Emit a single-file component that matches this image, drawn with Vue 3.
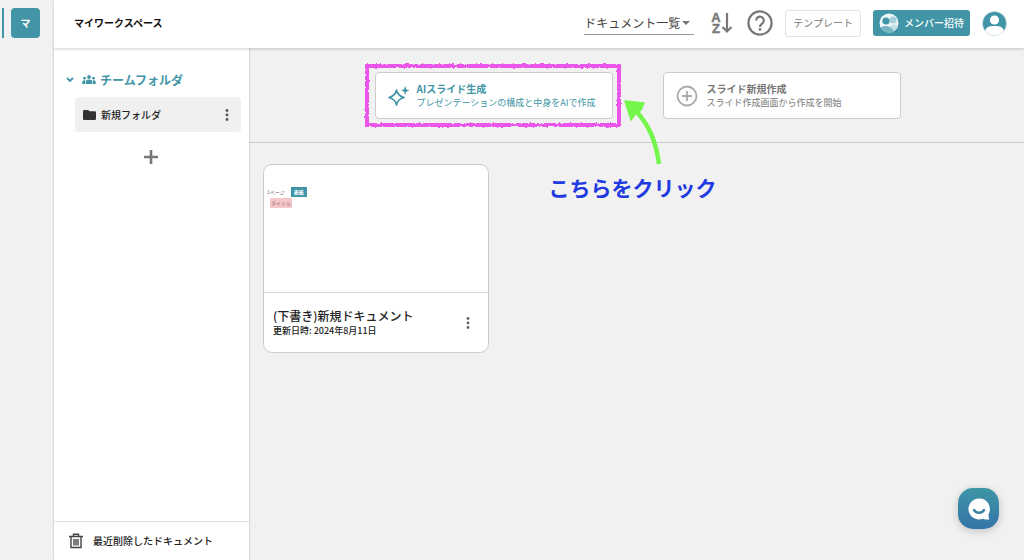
<script setup>
import { ref } from 'vue'

const listKind = ref('all')
const folders = ref([{ id: 1, name: '新規フォルダ' }])
const documents = ref([
  { id: 1, title: '(下書き)新規ドキュメント', updated: '2024年8月11日' },
])
</script>

<template>
  <div class="app">
    <nav class="rail" aria-label="ワークスペース">
      <span class="rail-mark"></span>
      <button class="workspace" type="button">マ</button>
    </nav>

    <div class="shell">
      <header class="topbar">
        <h1>マイワークスペース</h1>
        <div class="tools">
          <div class="select-wrap">
            <select v-model="listKind" aria-label="表示">
              <option value="all">ドキュメント一覧</option>
            </select>
            <svg class="caret" width="8" height="4" viewBox="0 0 8 4"><path d="M0 0h8L4 4z" fill="#777" /></svg>
          </div>
          <button class="icon-btn sort" type="button" aria-label="並び替え">
            <svg width="22" height="24" viewBox="0 0 22 24">
              <text text-anchor="middle" class="sort-letter"><tspan x="5" y="11">A</tspan><tspan x="5" y="22">Z</tspan></text>
              <path d="M16 2v18M11.500 16l4.500 4.500 4.500-4.500" fill="none" stroke="#777" stroke-width="2.200" />
            </svg>
          </button>
          <button class="icon-btn help" type="button" aria-label="ヘルプ">
            <svg width="26" height="26" viewBox="0 0 26 26" fill="none" stroke="#777">
              <circle cx="13" cy="13" r="11.600" stroke-width="2.200" />
              <path d="M9.200 10.500a3.800 3.800 0 1 1 6.400 2.700c-1.500 1.300-2.600 1.900-2.600 3.800" stroke-width="2.200" />
              <circle cx="13" cy="19.400" r="1.400" fill="#777" stroke="none" />
            </svg>
          </button>
          <button class="template" type="button">テンプレート</button>
          <button class="invite" type="button">
            <svg width="20" height="20" viewBox="0 0 20 20">
              <defs><clipPath id="invite-clip"><circle cx="10" cy="10" r="9.500" /></clipPath></defs>
              <circle cx="10" cy="10" r="9.500" fill="#edf6f8" />
              <g clip-path="url(#invite-clip)">
                <circle cx="14" cy="7" r="3.500" fill="#a5cdd6" />
                <path d="M10 20c0-7 2-8.500 5-8.500s5 2 5 8.500z" fill="#c3dfe5" />
                <circle cx="7" cy="8" r="3.600" fill="#4195a6" />
                <path d="M1 20c0-6 2-7 6-7s7 2 8 7z" fill="#78b5c2" />
              </g>
            </svg>
            メンバー招待
          </button>
          <button class="icon-btn avatar" type="button" aria-label="アカウント">
            <svg width="25" height="25" viewBox="0 0 25 25">
              <defs><clipPath id="avatar-clip"><circle cx="12.500" cy="12.500" r="12" /></clipPath></defs>
              <circle cx="12.500" cy="12.500" r="12" fill="#4195a6" />
              <g fill="#fff" clip-path="url(#avatar-clip)">
                <circle cx="12.500" cy="9" r="4.600" />
                <path d="M3 20c1-4 4-5 9.500-5s8.500 1 9.500 5l-3 5H6z" />
              </g>
              <circle cx="12.500" cy="12.500" r="12" fill="none" stroke="#d5e8ec" stroke-width=".6" />
            </svg>
          </button>
        </div>
      </header>

      <div class="body">
        <aside class="sidebar">
          <div class="tree">
            <button class="team" type="button">
              <svg class="chevron" width="8" height="6" viewBox="0 0 8 6"><path d="M1 1l3 3 3-3" fill="none" stroke="#4195a6" stroke-width="1.800" /></svg>
              <svg width="14" height="10" viewBox="0 0 14 10" fill="#4195a6">
                <circle cx="7" cy="2" r="1.900" /><circle cx="2.500" cy="3.200" r="1.400" /><circle cx="11.500" cy="3.200" r="1.400" />
                <path d="M4 9V6.500C4 5.300 5 4.600 7 4.600s3 .7 3 1.900V9z" />
                <path d="M.3 9V6.800C.3 5.700 1.100 5.200 3.300 5.200V9zM13.700 9V6.800c0-1.100-.8-1.600-3-1.600V9z" />
              </svg>
              チームフォルダ
            </button>
            <div v-for="f in folders" :key="f.id" class="folder">
              <button class="folder-name" type="button">
                <svg width="13" height="10" viewBox="0 0 13 10"><path d="M1.300 0h3.900l1.300 1.300h5.200c.7 0 1.300.5 1.300 1.200v6.200c0 .7-.6 1.300-1.300 1.300H1.300C.6 10 0 9.400 0 8.700V1.300C0 .6.600 0 1.300 0z" fill="#333" /></svg>
                {{ f.name }}
              </button>
              <button class="icon-btn dots" type="button" aria-label="フォルダメニュー"><svg width="4" height="12" viewBox="0 0 4 12" fill="#555"><circle cx="2" cy="1.500" r="1.400" /><circle cx="2" cy="6" r="1.400" /><circle cx="2" cy="10.500" r="1.400" /></svg></button>
            </div>
            <button class="icon-btn add" type="button" aria-label="フォルダを追加">
              <svg width="14" height="14" viewBox="0 0 14 14"><path d="M7 0v14M0 7h14" stroke="#777" stroke-width="2.600" /></svg>
            </button>
          </div>
          <button class="trash" type="button">
            <svg width="14" height="16" viewBox="0 0 14 16" fill="none" stroke="#444" stroke-width="1.400">
              <path d="M0 3.500h14M4.500 3.500V1.200h5v2.300M2 3.500v11h10v-11M5 6v6.500M7 6v6.500M9 6v6.500" />
            </svg>
            最近削除したドキュメント
          </button>
        </aside>

        <main>
          <section class="actions">
            <div class="action-slot">
              <button class="action ai" type="button">
                <svg width="22" height="22" viewBox="0 0 22 22" fill="none" stroke="#4195a6">
                  <path d="M8.500 5C9.300 9.500 11.200 11.200 16 12.500 11.200 13.800 9.300 15.500 8.500 20 7.700 15.500 5.800 13.800 1 12.500 5.800 11.200 7.700 9.500 8.500 5z" stroke-width="1.600" stroke-linejoin="round" />
                  <path d="M17.200 1.500c.3 2.500 1.200 3.500 3.600 3.900-2.400.4-3.300 1.400-3.600 3.900-.3-2.500-1.200-3.500-3.600-3.900 2.400-.4 3.300-1.400 3.600-3.900z" fill="#4195a6" stroke-width=".5" />
                </svg>
                <span class="action-text"><strong>AIスライド生成</strong><small>プレゼンテーションの構成と中身をAIで作成</small></span>
              </button>
              <svg class="marker" aria-hidden="true">
                <defs>
                  <filter id="rough" x="-5%" y="-10%" width="110%" height="120%">
                    <feTurbulence type="fractalNoise" baseFrequency=".35" numOctaves="2" seed="4" />
                    <feDisplacementMap in="SourceGraphic" scale="3" xChannelSelector="R" yChannelSelector="G" />
                  </filter>
                </defs>
                <g filter="url(#rough)"><rect class="marker-line" x="3" y="3" /></g>
              </svg>
              <svg class="arrow" width="40" height="70" viewBox="0 0 40 70" aria-hidden="true">
                <path d="M14 14C27 29 33 44 36 66" fill="none" stroke="#75f64c" stroke-width="4.500" />
                <path d="M2 3l19 2-3 7-5 3-5 7z" fill="#75f64c" stroke="#75f64c" stroke-width="1.500" stroke-linejoin="round" />
              </svg>
              <p class="callout">こちらをクリック</p>
            </div>
            <div class="action-slot">
              <button class="action" type="button">
                <svg width="22" height="22" viewBox="0 0 22 22" fill="none" stroke="#aaa" stroke-width="1.800"><circle cx="11" cy="11" r="9.500" /><path d="M11 6v10M6 11h10" /></svg>
                <span class="action-text"><strong>スライド新規作成</strong><small>スライド作成画面から作成を開始</small></span>
              </button>
            </div>
          </section>

          <section class="documents">
            <article v-for="d in documents" :key="d.id" class="doc">
              <div class="preview">
                <div class="page-line"><span>1ページ</span><span class="cover">表紙</span></div>
                <span class="title-tag">タイトル</span>
              </div>
              <div class="doc-info">
                <div>
                  <h2>{{ d.title }}</h2>
                  <p>更新日時: {{ d.updated }}</p>
                </div>
                <button class="icon-btn dots" type="button" aria-label="ドキュメントメニュー"><svg width="4" height="12" viewBox="0 0 4 12" fill="#666"><circle cx="2" cy="1.500" r="1.400" /><circle cx="2" cy="6" r="1.400" /><circle cx="2" cy="10.500" r="1.400" /></svg></button>
              </div>
            </article>
          </section>
        </main>
      </div>
    </div>

    <button class="chat" type="button" aria-label="チャット">
      <svg width="22" height="22" viewBox="0 0 22 22">
        <path d="M11 .5A10.500 10.500 0 1 0 15 20.700c2 .7 4 .8 6.500.8-.8-1.500-1-3-.9-5.500A10.500 10.500 0 0 0 11 .5z" fill="#fff" />
        <path d="M6 12c2.500 3.600 7.500 3.600 10 0" fill="none" stroke="#3783a5" stroke-width="2.400" stroke-linecap="round" />
      </svg>
    </button>
  </div>
</template>

<style>
body {
  margin: 0;
}
</style>

<style scoped>
.app {
  display: flex;
  min-height: 100vh;
  background: #f1f1f1;
  color: #222;
  font-family: "Noto Sans CJK JP", sans-serif;
  font-size: 10px;
  line-height: 16px;
}
.app * {
  box-sizing: border-box;
}
button, select {
  margin: 0;
  padding: 0;
  border: 0;
  background: none;
  color: inherit;
  font: inherit;
  cursor: pointer;
}
svg {
  display: block;
  flex: none;
}
h1, h2, p {
  margin: 0;
}
.icon-btn {
  display: flex;
  align-items: center;
  justify-content: center;
}
.rail {
  flex: 0 0 54px;
  display: flex;
  align-items: flex-start;
  gap: 7px;
  padding: 8px 0 0 2px;
}
.rail-mark {
  width: 2px;
  height: 30px;
  background: #4195a6;
}
.workspace {
  width: 29px;
  height: 30px;
  border-radius: 4px;
  background: #4195a6;
  color: #fff;
  font-weight: 700;
}
.shell {
  flex: 1;
  min-width: 0;
  display: flex;
  flex-direction: column;
}
.topbar {
  position: relative;
  z-index: 1;
  height: 48px;
  display: flex;
  align-items: center;
  justify-content: space-between;
  padding: 0 17px 2px 20px;
  background: #fff;
  box-shadow: 0 1px 3px #0003;
}
h1 {
  color: #111;
  font-size: 10px;
  font-weight: 700;
}
.tools {
  display: flex;
  align-items: center;
}
.select-wrap {
  position: relative;
  width: 110px;
  border-bottom: 1px solid #999;
}
select {
  width: 100%;
  height: 23px;
  appearance: none;
  color: #444;
  font-size: 12px;
}
.caret {
  position: absolute;
  right: 4px;
  top: 10px;
  pointer-events: none;
}
.sort {
  margin-left: 17px;
}
.sort-letter {
  fill: #777;
  stroke: #777;
  stroke-width: 0.4px;
  font: 700 13px "Liberation Sans", sans-serif;
}
.help {
  margin-left: 14px;
}
.template {
  height: 27px;
  margin-left: 12px;
  padding: 0 7px;
  border: 1px solid #e2e2e2;
  border-radius: 3px;
  color: #777;
}
.invite {
  display: flex;
  align-items: center;
  gap: 5px;
  height: 26px;
  margin-left: 12px;
  padding: 0 6px;
  border-radius: 3px;
  background: #4195a6;
  color: #fff;
  font-weight: 500;
}
.avatar {
  margin-left: 12px;
}
.body {
  flex: 1;
  display: flex;
}
.sidebar {
  flex: 0 0 195px;
  display: flex;
  flex-direction: column;
  justify-content: space-between;
  background: #fff;
  box-shadow: 0 0 2px #0004;
}
.tree {
  padding: 24px 8px 0 12px;
}
.team {
  display: flex;
  align-items: center;
  gap: 4px;
  color: #4195a6;
  font-size: 12px;
  font-weight: 700;
}
.chevron {
  margin-right: 4px;
}
.folder {
  display: flex;
  align-items: center;
  justify-content: space-between;
  height: 35px;
  margin: 9px 0 0 9px;
  padding: 0 12px 0 8px;
  border-radius: 4px;
  background: #f0f0f0;
}
.folder-name {
  display: flex;
  align-items: center;
  gap: 5px;
  font-weight: 500;
}
.add {
  width: 100%;
  margin-top: 18px;
  padding-right: 6px;
}
.trash {
  display: flex;
  align-items: center;
  gap: 10px;
  height: 39px;
  padding: 0 15px;
  border-top: 1px solid #ddd;
  font-weight: 500;
}
main {
  flex: 1;
  min-width: 0;
}
.actions {
  display: flex;
  justify-content: center;
  gap: 50px;
  padding: 24px 20px 23px 22px;
  border-bottom: 1px solid #ccc;
}
.action-slot {
  position: relative;
  flex: 0 1 238px;
}
.action {
  display: flex;
  align-items: center;
  gap: 9px;
  width: 100%;
  height: 47px;
  padding: 0 12px;
  border: 1px solid #ccc;
  border-radius: 4px;
  background: #fff;
  color: #777;
  text-align: left;
}
.ai {
  gap: 7px;
  color: #4195a6;
}
.action-text {
  display: flex;
  flex-direction: column;
  white-space: nowrap;
}
.action-text strong {
  line-height: 14px;
}
.action-text small {
  font-size: 9px;
  line-height: 14px;
}
.marker {
  position: absolute;
  left: -11px;
  top: -9px;
  width: calc(100% + 20px);
  height: calc(100% + 18px);
  overflow: visible;
  pointer-events: none;
}
.marker-line {
  width: calc(100% - 6px);
  height: calc(100% - 6px);
  fill: none;
  stroke: #ea57ea;
  stroke-width: 4px;
}
.arrow {
  position: absolute;
  left: 248px;
  top: 26px;
  pointer-events: none;
}
.callout {
  position: absolute;
  left: 174px;
  top: 99px;
  color: #1f3ae0;
  font-size: 21px;
  font-weight: 700;
  line-height: 32px;
  white-space: nowrap;
}
.documents {
  display: grid;
  grid-template-columns: repeat(auto-fill, 226px);
  gap: 14px;
  padding: 21px 14px;
}
.doc {
  border: 1px solid #ccc;
  border-radius: 9px;
  background: #fff;
}
.preview {
  height: 128px;
  padding: 22px 3px;
  border-bottom: 1px solid #d5d5d5;
  font-size: 5px;
  line-height: 10px;
  color: #666;
}
.page-line {
  display: flex;
  align-items: center;
  gap: 6px;
}
.cover {
  padding: 0 3px;
  background: #4195a6;
  color: #fff;
  font-weight: 700;
}
.title-tag {
  display: table;
  margin: 1px 0 0 3px;
  padding: 0 1px;
  border-radius: 1px;
  background: #f3c6c9;
  color: #a96468;
}
.doc-info {
  display: flex;
  align-items: center;
  justify-content: space-between;
  height: 59px;
  padding: 0 18px 0 9px;
}
h2 {
  font-size: 12px;
  font-weight: 500;
  line-height: 16px;
}
.doc-info p {
  font-size: 9px;
  font-weight: 500;
  line-height: 14px;
}
.chat {
  position: fixed;
  right: 25px;
  bottom: 31px;
  display: flex;
  align-items: center;
  justify-content: center;
  width: 41px;
  height: 41px;
  border-radius: 15px;
  background: linear-gradient(#3f95a5, #3474a8);
  box-shadow: 0 2px 8px #0003;
}
</style>
